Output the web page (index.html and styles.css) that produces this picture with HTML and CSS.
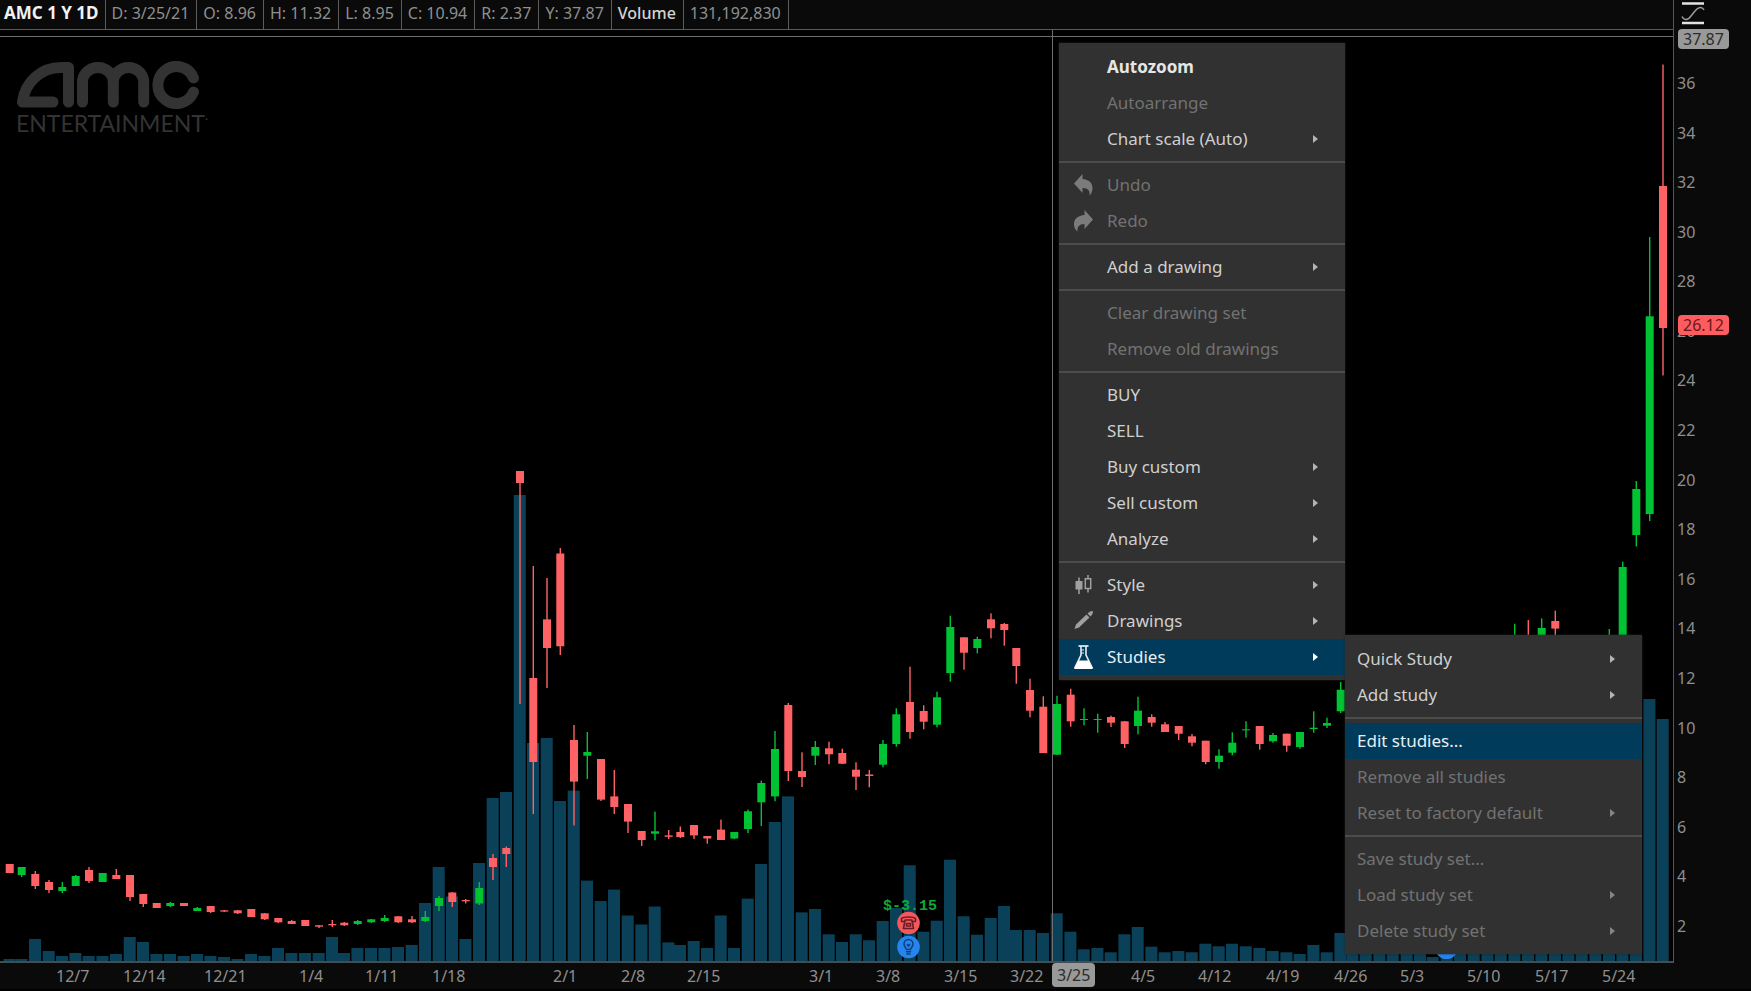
FILE: index.html
```html
<!DOCTYPE html>
<html lang="en">
<head>
<meta charset="utf-8">
<title>AMC 1 Y 1D</title>
<link rel="stylesheet" href="styles.css">
</head>
<body>
<main class="chart">
  <header class="info">
    <span class="cell symbol">AMC 1 Y 1D</span>
    <span class="cell">D: 3/25/21</span>
    <span class="cell">O: 8.96</span>
    <span class="cell">H: 11.32</span>
    <span class="cell">L: 8.95</span>
    <span class="cell">C: 10.94</span>
    <span class="cell">R: 2.37</span>
    <span class="cell">Y: 37.87</span>
    <span class="cell study">Volume</span>
    <span class="cell">131,192,830</span>
  </header>

  <section class="plot" aria-label="Price chart">
    <svg class="series" id="series" viewBox="0 30 1673 931" preserveAspectRatio="none" aria-hidden="true"></svg>

    <div class="brand">
      <svg class="brand-mark" viewBox="0 0 190 48" aria-hidden="true">
        <g fill="none" stroke="#333" stroke-width="11" stroke-linecap="round" stroke-linejoin="round">
          <path d="M37 41H6.500C9 21 25 6.500 45 6.500H52.500V41"/>
          <path d="M66.500 41V21a15.400 14.500 0 0 1 30.800 0V41M97.300 21a15.200 14.500 0 0 1 30.400 0V41"/>
          <path d="M177.500 17A18.500 18.500 0 1 0 177.500 31"/>
        </g>
      </svg>
      <span class="brand-name">ENTERTAINMENT<sup>·</sup></span>
    </div>

    <div class="event">
      <span class="event-value">$-3.15</span>
      <svg class="event-icons" viewBox="0 0 24 48" aria-hidden="true">
        <circle cx="12" cy="12" r="11.300" fill="#f2585e"/>
        <g fill="none" stroke="#6b1d24" stroke-width="1.600" stroke-linejoin="round">
          <path d="M5 10.500V7.500C7 5.500 17 5.500 19 7.500V10.500H15.500V9H8.500V10.500Z"/>
          <path d="M8 10.500V12L7 17.500H17L16 12V10.500"/>
          <path d="M10 12.500H14V15H10Z"/>
        </g>
        <circle cx="12" cy="36" r="11.300" fill="#2585ee"/>
        <g fill="none" stroke="#0c3f7c" stroke-width="1.500" stroke-linecap="round">
          <path d="M10 38.500C9.800 37 7.500 36 7.500 33A4.500 4.500 0 0 1 16.500 33C16.500 36 14.200 37 14 38.500Z"/>
          <path d="M10 40.700H14M10.500 43H13.500M10.800 33.500L12 35L13.200 33.500"/>
        </g>
      </svg>
    </div>
    <span class="event-dot"></span>
  </section>

  <aside class="prices" aria-label="Price axis">
    <button class="scale-button" type="button" aria-label="Fit scale">
      <svg viewBox="0 0 24 24" width="24" height="24" aria-hidden="true">
        <path d="M1 2.500H23M1 22H23" stroke="#e4e4e4" stroke-width="2.400"/>
        <path d="M1 15.500C3 19.500 7 19.500 10 15L14 10C17 6 21 5 23 9" fill="none" stroke="#9a9a9a" stroke-width="1.500"/>
      </svg>
    </button>
    <div class="price-labels" id="prices"></div>
    <span class="tag cursor-price">37.87</span>
    <span class="tag last-price">26.12</span>
  </aside>

  <footer class="dates">
    <div class="date-labels" id="dates"></div>
    <span class="tag cursor-date">3/25</span>
  </footer>

  <nav class="menu main-menu" aria-label="Chart menu">
    <ul>
      <li><button class="item strong" type="button">Autozoom</button></li>
      <li><button class="item" type="button" disabled>Autoarrange</button></li>
      <li><button class="item more" type="button">Chart scale (Auto)</button></li>
      <li class="rule"></li>
      <li><button class="item" type="button" disabled>
        <svg class="icon" viewBox="0 0 20 24" aria-hidden="true"><path d="M0 10.500L8.500 1V6C15 6.500 18.500 10 18.500 15C18.500 18 17.500 20.500 15.500 22.500C16 18 14.500 15 8.500 15V20Z" fill="#7b7b7b"/></svg>Undo</button></li>
      <li><button class="item" type="button" disabled>
        <svg class="icon" viewBox="0 0 20 24" aria-hidden="true"><path d="M19 10.500L10.500 1V6C4 6.500 0 10 0 15C0 18 1 20.500 3.500 22.500C3 18 5 15 10.500 15V20Z" fill="#7b7b7b"/></svg>Redo</button></li>
      <li class="rule"></li>
      <li><button class="item more" type="button">Add a drawing</button></li>
      <li class="rule"></li>
      <li><button class="item" type="button" disabled>Clear drawing set</button></li>
      <li><button class="item" type="button" disabled>Remove old drawings</button></li>
      <li class="rule"></li>
      <li><button class="item" type="button">BUY</button></li>
      <li><button class="item" type="button">SELL</button></li>
      <li><button class="item more" type="button">Buy custom</button></li>
      <li><button class="item more" type="button">Sell custom</button></li>
      <li><button class="item more" type="button">Analyze</button></li>
      <li class="rule"></li>
      <li><button class="item more" type="button">
        <svg class="icon" viewBox="0 0 20 24" aria-hidden="true"><path d="M1.500 8H8.500V16.500H1.500Z" fill="#a0a0a0"/><path d="M5 4.500V21M14 2V6M14 16V19.500" stroke="#a0a0a0" stroke-width="1.500"/><path d="M11.300 5.800H16.700V15.500H11.300Z" fill="none" stroke="#a0a0a0" stroke-width="1.500"/></svg>Style</button></li>
      <li><button class="item more" type="button">
        <svg class="icon" viewBox="0 0 20 24" aria-hidden="true"><path d="M0.500 20L2 15.500L12.500 5.500L15.500 8.500L5 18.500ZM13.500 4.500L16 2.500L19 2L18.500 5L16.500 7.500Z" fill="#a0a0a0"/></svg>Drawings</button></li>
      <li class="parent"><button class="item more active" type="button" aria-expanded="true">
        <svg class="icon" viewBox="0 0 20 24" aria-hidden="true"><path d="M4.500 1H14.500" stroke="#e8eef2" stroke-width="1.700"/><path d="M7 1V10L1 22.500H18L12 10V1" fill="none" stroke="#e8eef2" stroke-width="1.600"/><path d="M4.500 15.500H14.500L18.800 24H0.200Z" fill="#fff"/><path d="M7 5H10M7 8H10" stroke="#e8eef2" stroke-width="1"/></svg>Studies</button>
        <div class="menu sub-menu">
          <ul>
            <li><button class="item more" type="button">Quick Study</button></li>
            <li><button class="item more" type="button">Add study</button></li>
            <li class="rule"></li>
            <li><button class="item active" type="button">Edit studies...</button></li>
            <li><button class="item" type="button" disabled>Remove all studies</button></li>
            <li><button class="item more" type="button" disabled>Reset to factory default</button></li>
            <li class="rule"></li>
            <li><button class="item" type="button" disabled>Save study set...</button></li>
            <li><button class="item more" type="button" disabled>Load study set</button></li>
            <li><button class="item more" type="button" disabled>Delete study set</button></li>
          </ul>
        </div>
      </li>
    </ul>
  </nav>
</main>
<script src="chart.js"></script>
</body>
</html>
```

FILE: styles.css
```css
* { box-sizing: border-box; }

html, body { height: 100%; }

body {
  margin: 0;
  background: #000;
  color: #8f8f8f;
  font: 16px/20px "Noto Sans", "Open Sans", sans-serif;
}

.chart {
  position: relative;
  display: grid;
  grid-template-columns: minmax(0, 1fr) 78px;
  grid-template-rows: auto minmax(0, 1fr) 28px;
  height: 100%;
  overflow: hidden;
}

.info {
  display: flex;
  height: 30px;
  background: #0a0a0a;
  border-bottom: 1px solid #5c5c5c;
}

.cell {
  padding: 3px 7px 0 6px;
  border-right: 1px solid #5c5c5c;
  white-space: nowrap;
}

.symbol {
  padding: 3px 6px 0 4px;
  color: #f2f2f2;
  font-size: 17px;
  font-weight: 700;
}

.study {
  color: #d4d4d4;
  font-weight: 500;
}

.plot {
  position: relative;
  grid-row: 2;
  min-height: 0;
  border-bottom: 2px solid #434d52;
}

.series {
  display: block;
  width: 100%;
  height: 100%;
}

.volume { fill: #0a4159; }
.up { fill: #00c232; }
.down { fill: #ff6265; }
.crosshair { fill: #6e6e6e; }

.brand {
  position: absolute;
  left: 16px;
  top: 31px;
  display: flex;
  flex-direction: column;
  color: #333;
}

.brand-mark {
  width: 190px;
  height: 48px;
}

.brand-name {
  margin-top: 2px;
  font: 23px/24px Lato, sans-serif;
}

.brand-name sup {
  font-size: 12px;
  line-height: 0;
}

.event {
  position: absolute;
  left: 54.3%;
  bottom: 2px;
  display: flex;
  flex-direction: column;
  align-items: center;
  transform: translateX(-50%);
}

.event-value {
  margin-bottom: -4px;
  padding-left: 3px;
  color: #0bab35;
  font: 700 15px/16px "Liberation Mono", monospace;
}

.event-icons {
  width: 24px;
  height: 48px;
}

.event-dot {
  position: absolute;
  left: 85.8%;
  bottom: 2px;
  width: 23px;
  height: 23px;
  border-radius: 50%;
  background: #2585ee;
}

.prices {
  position: relative;
  grid-column: 2;
  grid-row: 1 / 3;
  display: flex;
  flex-direction: column;
  background: #0a0a0a;
  border-left: 1px solid #555;
}

.scale-button {
  align-self: flex-start;
  height: 26px;
  margin-left: 7px;
  padding: 1px 0;
  border: 0;
  background: none;
}

.scale-button svg { display: block; }

.price-labels {
  flex: 1;
  display: flex;
  flex-direction: column;
  justify-content: space-between;
  padding: 47px 0 27px 3px;
}

.tag {
  position: absolute;
  height: 20px;
  padding: 0 5px;
  border-radius: 4px;
  line-height: 20px;
}

.cursor-price {
  left: 4px;
  top: 29px;
  background: #999;
  color: #2c2c2c;
}

.last-price {
  left: 4px;
  top: 315px;
  background: #ff5c60;
  color: #6b1719;
}

.dates {
  position: relative;
  grid-column: 1 / 3;
  padding-right: 77px;
  background: #0a0a0a;
  border-bottom: 2px solid #000;
}

.date-labels {
  display: flex;
  padding-top: 3px;
}

.date-labels span {
  flex-basis: 0;
  min-width: 0;
  white-space: nowrap;
}

.cursor-date {
  left: 1052px;
  top: 0;
  height: 24px;
  padding: 2px 5px;
  background: #999;
  color: #2c2c2c;
}

.menu {
  position: absolute;
  padding: 6px 0 5px;
  background: #313131;
  box-shadow: 0 0 2px #222;
}

.menu ul {
  margin: 0;
  padding: 0;
  list-style: none;
}

.main-menu {
  left: 1059px;
  top: 43px;
  width: 286px;
}

.sub-menu {
  left: 100%;
  top: -4px;
  width: 297px;
}

.parent { position: relative; }

.rule {
  height: 10px;
  padding-top: 4px;
}

.rule::before {
  content: "";
  display: block;
  height: 2px;
  background: #4c4c4c;
}

.item {
  position: relative;
  display: flex;
  align-items: center;
  width: 100%;
  height: 36px;
  padding: 0 27px 0 48px;
  border: 0;
  background: none;
  color: #cfcfcf;
  font: 17px/20px "Noto Sans", "Open Sans", sans-serif;
  text-align: left;
}

.item:disabled { color: #727272; }

.item.strong {
  color: #e6e6e6;
  font-weight: 700;
}

.item.active {
  background: #003b5c;
  color: #e8eef2;
}

.sub-menu .item { padding-left: 12px; }

.icon {
  position: absolute;
  left: 15px;
  width: 20px;
  height: 24px;
}

.more::after {
  content: "";
  margin-left: auto;
  border: 4px solid transparent;
  border-left: 5px solid #b4b4b4;
  border-right-width: 0;
}

.more:disabled::after { border-left-color: #858585; }
.more.active::after { border-left-color: #fff; }
```

FILE: chart.js
```js
// One row per session: x, direction, high, body top, body bottom, low, volume top.
const sessions = [
  [9.7,"d",864,864,873,873,959],[21.7,"u",867,867,875,877,959],[35.3,"d",871,874,886,889,939],
  [49,"d",880,882,890,893,951],[62.3,"u",882,887,891,893,956],[75.7,"u",875,876,886,886,953],
  [89,"d",867,870,881,883,956],[102.7,"u",873,873,882,882,956],[116.3,"d",869,875,879,879,954],
  [130,"d",875,875,897,901,937],[143.3,"d",894,894,904,907,942],[156.7,"d",903,903,908,908,954],
  [170.3,"u",902,903,906,907,954],[184,"d",903,903,906,906,956],[197.3,"u",907,908,911,911,954],
  [210.7,"d",906,906,912,913,956],[224.3,"d",910,910.3,911.6,912,957],[237.7,"d",910,910.3,913.3,914,959],
  [251.3,"d",909,909,917,917,954],[264.7,"d",913,913.3,919.3,920,956],[278.3,"d",918,918,922.3,923,948],
  [291.7,"d",920,921,924,924,953],[305.3,"d",920,920,926,926,953],[319,"d",925,925.3,926.7,928,953],
  [332.3,"d",920,924,925.3,927,937],[344.3,"d",922,922.7,925.3,926,953],[357.7,"u",920,921,924,925,948],
  [371.3,"u",919,919.3,922.3,923,948],[384.7,"u",915,918,921,922,948],[398.3,"d",916,916.3,922.3,923,947],
  [412,"d",916,919.3,922.3,923,945],[425.3,"u",911,917,921,922,903],[439,"u",896,898,906,911,867],
  [452.3,"d",892,892.5,902,907,896.5],[465.7,"d",899,900,901.3,903.5,939],[479.3,"u",882,888,903.5,905,863],
  [493,"d",854,858,867,880,798],[506.3,"d",846.5,848,854,867,792],[520,"d",471,471,483,704,495],
  [533.3,"d",566,678,762,814,743],[547,"d",578,619.4,648,688,738],[560.3,"d",548,553.5,646.3,655,801],
  [574,"d",725,740,781.6,825.4,790.6],[587.3,"u",732,752,755.7,779,880.6],[601,"d",759,759,799.6,801,901],
  [614.3,"d",770,796.4,807,814,889.6],[628,"d",804,804,821.6,833,915.5],[641.7,"d",831,831,840,846,924.5],
  [655,"u",811.6,831.3,833.7,840.3,906.5],[668.7,"d",830,835.4,836.8,839,942.4],[680.3,"d",826.5,832,837,838,945],
  [694,"d",825,825,835.4,839,941],[707.3,"d",836,836,838.5,843.7,948],[721,"d",819.6,829.6,840,840,915.5],
  [734.3,"u",832,832,838.5,839,948],[748,"u",809.6,811.3,829,833,898.6],[761.3,"u",780.6,783,802.3,826,864],
  [775,"u",731,749,796.4,801.3,822],[788.3,"d",703,705,771,781,796.4],[802,"d",752.3,771,777,787,912.4],
  [815.3,"u",741,747,755.7,765,909],[829,"d",741.7,748.3,754.3,764.3,934.3],[842.3,"d",748.7,753,763.7,764,942],
  [856,"d",762.3,769.7,776.7,790,934.3],[869.3,"d",770,774.5,776,787.3,940.3],[883,"u",740,744,764.7,767.3,921],
  [896.3,"u",708.3,714.3,744,746.7,908],[910,"d",666.7,702,732,738.7,865.3],[923.7,"d",705.3,711,721.7,729.3,931.7],
  [937,"u",691.7,697.3,724.7,727.3,920.7],[950.3,"u",615.7,627,673,681.7,859.7],[964,"d",637.3,637.3,652.7,669.7,916.3],
  [977.3,"u",636.7,639,648,653.3,934.7],[991,"d",613.3,619.3,628.3,638.3,918],[1004.3,"d",623,624,630,645.7,906],
  [1016.3,"d",648,648,666,683.7,930],[1030,"d",678.7,690,710.7,717.3,930],[1043.3,"d",696.3,706.7,753,753,933],
  [1057,"u",695.7,704,754.7,755,913.3],[1070.7,"d",688.7,694.7,721.3,726.7,931.7],[1084,"u",708.3,719,720,725.3,949.3],
  [1097.7,"u",713.7,719,720,732.7,948],[1111,"d",715.7,717,722.7,727,952.3],[1124.7,"d",721,721.3,744,748,934.3],
  [1138,"u",696.7,710.7,726,734.3,927],[1151.7,"d",714.3,717,722.7,726.7,946.7],[1165,"d",722,724.3,732,732,952.3],
  [1178.7,"d",726,726,733.7,740,951],[1192,"d",734,736.3,742.7,746.3,952.3],[1205.7,"d",740.7,740.7,762,764.3,943.7],
  [1219,"u",749.3,755.7,762,768.7,946.3],[1232.3,"u",732.3,742.7,752.7,755.3,943.7],[1246,"u",721.3,729.3,730.3,737.7,946.3],
  [1259.7,"d",726,726,744,749.7,948],[1273,"u",733,735,741.3,742.7,951],[1286.7,"d",733.7,733.7,745.7,751.7,952.3],
  [1300,"u",732,732,747,748.7,954],[1313.7,"u",711.3,727.7,729,732.7,945],[1327,"u",717.7,723,725.7,728,952.3],
  [1340.7,"u",682,689.7,711.3,713,933],
  [1352.7,"u",684,686,690,694,948],[1366,"d",684,688,694,698,948],[1379.7,"u",680,684,690,694,948],
  [1393,"d",684,688,694,698,948],[1407,"u",680,684,690,694,948],[1420.3,"d",684,688,694,698,948],
  [1433,"u",680,684,690,694,957],[1447,"d",684,688,694,698,957],[1460.3,"u",680,684,690,694,948],
  [1474,"d",660,664,670,674,948],[1487.7,"u",660,664,670,674,948],[1501,"d",660,664,670,674,948],
  [1514.7,"u",623.7,644,650,652,948],[1528.3,"d",620,644,650,652,948],[1541.7,"u",618.4,628,650,652,948],
  [1555.3,"d",610.6,621,628.6,637,948],[1568.7,"d",644,646,650,652,948],[1582,"d",644,646,650,652,948],
  [1595.7,"u",644,646,650,652,948],[1609.3,"u",629,644,650,652,948],[1622.7,"u",561.6,567,650,652,948],
  [1636.3,"u",481,489,535,546.5,948],[1649.7,"u",237,316.3,514,521,699],[1663,"d",64.5,186,328,375.5,719]
];

const BASELINE = 961;
const rect = (cls, x, y, w, h) =>
  `<rect class="${cls}" x="${x.toFixed(1)}" y="${y}" width="${w}" height="${h.toFixed(1)}"/>`;

let bars = "";
let candles = "";
for (const [x, dir, high, top, bottom, low, volume] of sessions) {
  const cls = dir === "u" ? "up" : "down";
  bars += rect("volume", x - 6.3, volume, 12, BASELINE - volume);
  candles += rect(cls, x - 0.7, high, 1.4, low - high) + rect(cls, x - 4, top, 8, bottom - top);
}
document.getElementById("series").innerHTML =
  bars + candles + rect("crosshair", 0, 36, 1673, 1) + rect("crosshair", 1052, 30, 1, 931);

const prices = [];
for (let p = 36; p >= 2; p -= 2) prices.push(`<span>${p}</span>`);
document.getElementById("prices").innerHTML = prices.join("");

// Each label begins at its week's first session and takes the room up to the next one.
const weeks = [
  ["", 0], ["12/7", 56], ["12/14", 123], ["12/21", 204], ["1/4", 299], ["1/11", 365], ["1/18", 432],
  ["2/1", 553], ["2/8", 621], ["2/15", 687], ["3/1", 809], ["3/8", 876], ["3/15", 944], ["3/22", 1010],
  ["4/5", 1131], ["4/12", 1198], ["4/19", 1266], ["4/26", 1334], ["5/3", 1400], ["5/10", 1467],
  ["5/17", 1535], ["5/24", 1602]
];
document.getElementById("dates").innerHTML = weeks
  .map(([text, start], i) => {
    const end = i + 1 < weeks.length ? weeks[i + 1][1] : 1674;
    return `<span style="flex-grow:${end - start}">${text}</span>`;
  })
  .join("");
```
